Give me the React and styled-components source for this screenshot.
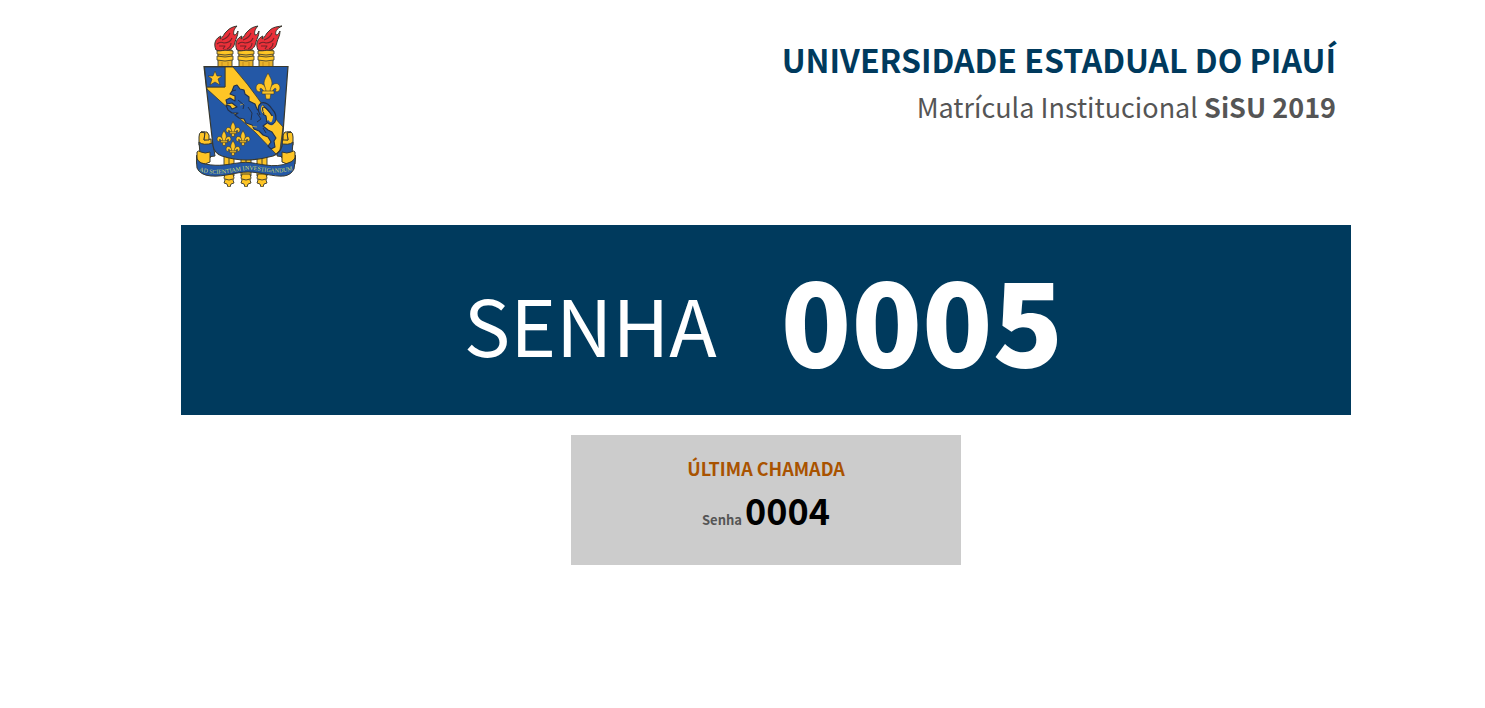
import React from 'react';
import styled, { createGlobalStyle } from 'styled-components';

const GlobalStyle = createGlobalStyle`
  * { box-sizing: border-box; }
  body {
    margin: 0;
    background: #fff;
    color: #555;
    font-family: "Noto Sans CJK JP", "Noto Sans", sans-serif;
  }
`;

const Page = styled.div`
  padding-left: 47px;
`;

const Container = styled.main`
  max-width: 1170px;
  margin: 0 auto;
`;

const Header = styled.header`
  display: flex;
  justify-content: space-between;
  align-items: flex-start;
  padding: 25px 15px 38px;
`;

const Crest = styled.svg`
  display: block;
  width: 100px;
  height: 162px;
  flex: none;
`;

const Heading = styled.div`
  padding-top: 10px;
  text-align: right;
`;

const Institution = styled.h1`
  margin: 0;
  color: #003a5d;
  font-size: 32px;
  font-weight: 700;
  line-height: 48px;
`;

const Subtitle = styled.p`
  margin: 0;
  font-size: 27px;
  line-height: 48px;
`;

const Banner = styled.section`
  display: flex;
  justify-content: center;
  align-items: center;
  gap: 64px;
  min-height: 190px;
  padding-right: 5px;
  background: #003a5d;
  color: #fff;
`;

const BannerLabel = styled.span`
  padding-top: 6px;
  font-size: 78px;
  line-height: 112px;
`;

const BannerNumber = styled.strong`
  padding-bottom: 8px;
  font-size: 116px;
  font-weight: 900;
  line-height: 168px;
`;

const LastCall = styled.section`
  width: 100%;
  max-width: 390px;
  min-height: 130px;
  margin: 20px auto 0;
  padding-top: 20px;
  background: #ccc;
  text-align: center;
`;

const LastCallTitle = styled.h2`
  margin: 0;
  color: #a95300;
  font-size: 18px;
  font-weight: 700;
  line-height: 26px;
`;

const LastCallTicket = styled.p`
  display: flex;
  justify-content: center;
  align-items: baseline;
  gap: 3px;
  margin: 0;
  font-size: 13px;
  font-weight: 700;
  line-height: 56px;
`;

const LastCallNumber = styled.strong`
  color: #000;
  font-size: 36px;
  font-weight: 700;
`;

const GOLD = '#fec526';
const BLUE = '#2458a6';
const INK = '#37382f';

function Lily({ x, y, size }) {
  return (
    <g transform={`translate(${x} ${y}) scale(${size})`} fill={GOLD} stroke={INK} strokeWidth={0.6 / size}>
      <path d="M-2 2C-5-4-12-4-12 2C-12 5-9 7-7 5C-9 4-8 1-6 3L-3 7L-2 13L2 13L3 7L6 3C8 1 9 4 7 5C9 7 12 5 12 2C12-4 5-4 2 2Z" />
      <path d="M0-13C-2-9-4-6-4-3C-4 0-2 2-2 6L2 6C2 2 4 0 4-3C4-6 2-9 0-13Z" />
      <path d="M-6 5H6V8H-6Z" />
    </g>
  );
}

function Torch({ x }) {
  return (
    <g transform={`translate(${x} 0)`}>
      <path d="M-7 25H7V43H-7Z" fill="#eab32a" stroke={INK} strokeWidth=".9" />
      <path d="M-8 26Q0 24 8 26V29Q0 31-8 29ZM-8 31Q0 33 8 31V35Q0 37-8 35Z" fill={GOLD} stroke={INK} strokeWidth=".8" />
      <path d="M-3 37V42M3 37V42" stroke="#c38a1c" strokeWidth="1" />
    </g>
  );
}

function Flame({ x, tip }) {
  return (
    <g transform={`translate(${x} 0)`} strokeLinejoin="round">
      <path
        d={`M-9 25C-12 18-9 13-4 11L-5 14C-2 13-1 8 2 6C5 3 7 2 ${tip} 1C9 4 8 7 9 10C11 10 12 8 13 6C13 11 11 13 10 17C9 23 5 26 0 25C-4 26-6 26-9 25Z`}
        fill="#ea3039" stroke={INK} strokeWidth="1"
      />
      <path d="M-8 19Q-5 16-1 18Q5 18 7 13M-6 21H0L-2 24M2 24Q6 22 6 18M-3 15Q3 13 5 8" fill="none" stroke="#762329" strokeWidth="1.100" />
    </g>
  );
}

function TorchFoot({ x }) {
  return (
    <g transform={`translate(${x} 0)`} fill={GOLD} stroke={INK} strokeWidth=".9">
      <path d="M-5 131H5V151H-5Z" />
      <path d="M-4 149H4L5 153L4 155L5 158L2 159L1 162H-1L-2 159L-5 158L-4 155L-5 153Z" />
      <path d="M-4 154Q0 156 4 154M0 133V140" fill="none" />
    </g>
  );
}

function UniversityCrest() {
  return (
    <Crest viewBox="0 0 100 162" role="img" aria-label="Brasão da Universidade Estadual do Piauí">
      <defs>
        <path id="motto-line" d="M3 146C23 152 34 147 50 145C66 144 79 152 99 144" />
      </defs>
      {[29, 50, 70].map((x) => <Torch key={x} x={x} />)}
      <Flame x={29} tip={12} />
      <Flame x={50} tip={12} />
      <Flame x={71} tip={15} />
      {[33, 50, 66].map((x) => <TorchFoot key={x} x={x} />)}

      <g stroke={INK} strokeWidth="1" strokeLinejoin="round">
        <path fill={GOLD} d="M16 129L15 114L8 115L9 107H5Q3 108 3 112L3 120L14 133Z" />
        <path fill={GOLD} d="M5 107H11Q14 109 13 115L8 115L9 108Z" />
        <path fill={BLUE} d="M3 117Q7 121 17 118L19 131Q8 133 4 129Z" />
        <path fill={GOLD} d="M1 127Q2 125 5 127Q9 129 14 127V137Q10 140 4 138L1 139Z" />
        <path fill={GOLD} d="M84 129L85 114L92 115L91 107H95Q97 108 97 112L97 120L86 133Z" />
        <path fill={GOLD} d="M95 107H89Q86 109 87 115L92 115L91 108Z" />
        <path fill={BLUE} d="M97 117Q93 121 83 118L81 131Q92 133 96 129Z" />
        <path fill={GOLD} d="M99 127Q98 125 95 127Q91 129 86 127V137Q90 140 96 138L99 139Z" />
      </g>

      <path fill={BLUE} d="M8 41.5H92L86 121Q84 128 77 131Q62 135 50 135Q38 135 26 131Q18 128 17 121Z" />
      <path fill={GOLD} stroke={INK} strokeWidth=".8" d="M29 42H37Q52 59 66 79L87 102L84 125L80 129L59 107L34 85L11 64L10.500 62H29Z" />
      <path fill={BLUE} stroke={INK} strokeWidth=".8" d="M8.500 42H29V62H10.500Z" />
      <path fill={GOLD} stroke={INK} strokeWidth=".6" d="M19 46L21 51L26 51L22 54L24 60L19 57L14 60L16 54L12 51L17 51Z" />

      <g fill={BLUE} stroke="#22304a" strokeWidth="1.100" strokeLinejoin="round">
        <path d="M38 61L41 60L44 64L48 65L49 69L53 72L53 76L59 79L61 84L65 88L70 91L71 98L67 101L72 105L76 107L80 113L78 116L79 122L75 124L72 121L75 117L72 112L67 110L63 106L58 104L56 100L50 98L48 94L43 93L39 90L42 88L36 88L32 85L30 80L34 81L36 84L41 82L36 78L31 79L30 75L34 73L39 76L39 71L34 69L36 66Z" />
        <path fill="none" stroke={BLUE} strokeWidth="3" d="M66 91Q61 82 66 79Q71 77 75 84Q80 88 78 95Q76 102 71 96" />
        <path fill="none" d="M64 90Q60 82 65 78Q71 76 76 84Q82 90 79 97Q75 102 70 96M68 89Q65 82 68 82Q72 84 76 91" />
      </g>
      <g fill="none" stroke={GOLD} strokeWidth=".6">
        <path d="M44 80L48 79M67 86L71 89L72 94M54 101L61 102" />
      </g>
      <path d="M36 66L40 65M42 75L48 80L47 84M52 82L56 88L55 95M61 88L65 94L61 97M67 103L70 108" fill="none" stroke="#22304a" strokeWidth="1" />

      <path fill="none" stroke={INK} strokeWidth="1.200" d="M8 41.5H92L86 121Q84 128 77 131Q62 135 50 135Q38 135 26 131Q18 128 17 121Z" />

      <Lily x={72} y={61} size={1} />
      <Lily x={37} y={104} size={0.58} />
      <Lily x={28} y={113} size={0.58} />
      <Lily x={47} y={113} size={0.58} />
      <Lily x={37} y={123} size={0.58} />

      <path
        fill={BLUE} stroke={INK} strokeWidth="1"
        d="M0 130Q1 138 9 139C24 142 32 139 42 138C53 136 60 139 69 140Q83 142 92 138Q99 136 100 130L98 144Q95 150 88 151C77 152 65 147 52 147C39 147 29 152 15 151Q4 150 1 143Z"
      />
      <text fill="#d1dd6c" fontFamily="'Liberation Serif', serif" fontSize="6" fontWeight="400">
        <textPath href="#motto-line">AD SCIENTIAM INVESTIGANDUM</textPath>
      </text>
    </Crest>
  );
}

export default function App() {
  return (
    <>
      <GlobalStyle />
      <Page>
        <Container>
          <Header>
            <UniversityCrest />
            <Heading>
              <Institution>UNIVERSIDADE ESTADUAL DO PIAUÍ</Institution>
              <Subtitle>Matrícula Institucional <strong>SiSU 2019</strong></Subtitle>
            </Heading>
          </Header>
          <Banner>
            <BannerLabel>SENHA</BannerLabel>
            <BannerNumber>0005</BannerNumber>
          </Banner>
          <LastCall>
            <LastCallTitle>ÚLTIMA CHAMADA</LastCallTitle>
            <LastCallTicket>
              <span>Senha</span>
              <LastCallNumber>0004</LastCallNumber>
            </LastCallTicket>
          </LastCall>
        </Container>
      </Page>
    </>
  );
}
